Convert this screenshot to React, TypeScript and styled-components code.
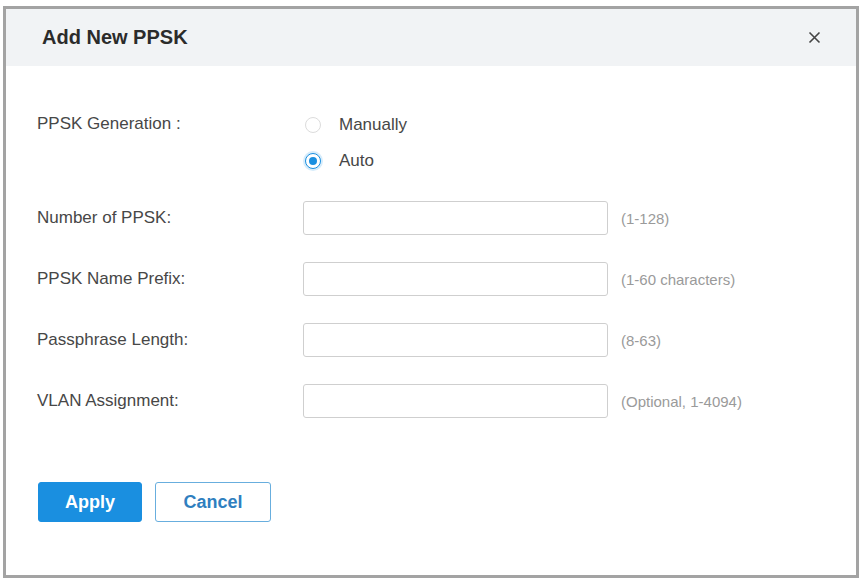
import React, { useState } from 'react';
import styled, { createGlobalStyle } from 'styled-components';

const GlobalStyle = createGlobalStyle`
  html, body {
    margin: 0;
    padding: 0;
    background: #ffffff;
    font-family: "Liberation Sans", Arial, sans-serif;
  }
`;

const Page = styled.div`
  width: 865px;
  height: 579px;
  padding: 6px 0 0 3px;
  box-sizing: border-box;
`;

const Dialog = styled.div`
  width: 856px;
  height: 572px;
  box-sizing: border-box;
  border: 3px solid #a3a3a3;
  background: #fff;
  display: flex;
  flex-direction: column;
`;

const Header = styled.div`
  height: 57px;
  flex-shrink: 0;
  background: #f1f3f5;
  display: flex;
  align-items: center;
  justify-content: space-between;
  padding: 0 32px 0 36px;
`;

const Title = styled.h2`
  margin: 0;
  font-size: 20px;
  font-weight: 700;
  color: #2b2b2b;
`;

const CloseButton = styled.button`
  border: none;
  background: transparent;
  padding: 0;
  width: 20px;
  height: 20px;
  display: flex;
  align-items: center;
  justify-content: center;
  cursor: pointer;
  color: #444;
`;

const Body = styled.div`
  padding: 41px 30px 0 31px;
  display: flex;
  flex-direction: column;
`;

const Row = styled.div<{ $gap?: number }>`
  display: flex;
  align-items: center;
  margin-bottom: ${(p) => p.$gap ?? 27}px;
`;

const TopRow = styled(Row)`
  align-items: flex-start;
`;

const Label = styled.div`
  width: 266px;
  flex-shrink: 0;
  font-size: 17px;
  color: #474747;
`;

const TopLabel = styled(Label)`
  line-height: 34px;
`;

const RadioGroup = styled.div`
  display: flex;
  flex-direction: column;
`;

const RadioItem = styled.label`
  height: 36px;
  display: flex;
  align-items: center;
  gap: 18px;
  padding-left: 2px;
  font-size: 17px;
  color: #474747;
  cursor: pointer;
`;

const RadioCircle = styled.span<{ $checked: boolean }>`
  width: 16px;
  height: 16px;
  box-sizing: border-box;
  border-radius: 50%;
  border: 1px solid ${(p) => (p.$checked ? '#1a8fe0' : '#dcdcdc')};
  background: #fff;
  display: flex;
  align-items: center;
  justify-content: center;
  box-shadow: ${(p) => (p.$checked ? '0 0 0 2px #d6ecfb' : 'none')};

  &::after {
    content: '';
    width: 8px;
    height: 8px;
    border-radius: 50%;
    background: ${(p) => (p.$checked ? '#1a8fe0' : 'transparent')};
  }
`;

const Input = styled.input`
  width: 305px;
  height: 34px;
  box-sizing: border-box;
  border: 1px solid #cfcfcf;
  border-radius: 3px;
  padding: 0 10px;
  font-size: 14px;
  font-family: inherit;
  outline: none;
`;

const Hint = styled.span`
  margin-left: 13px;
  font-size: 15px;
  color: #9a9a9a;
`;

const Footer = styled.div`
  display: flex;
  gap: 13px;
  padding: 64px 0 0 1px;
`;

const Button = styled.button<{ $primary?: boolean }>`
  height: 40px;
  box-sizing: border-box;
  border-radius: 3px;
  font-family: inherit;
  font-size: 18px;
  font-weight: 700;
  cursor: pointer;
  border: 1px solid ${(p) => (p.$primary ? '#1a8fe0' : '#68aede')};
  background: ${(p) => (p.$primary ? '#1a8fe0' : '#ffffff')};
  color: ${(p) => (p.$primary ? '#ffffff' : '#2f7fbf')};
  width: ${(p) => (p.$primary ? 104 : 116)}px;
`;

const fields = [
  { label: 'Number of PPSK:', hint: '(1-128)' },
  { label: 'PPSK Name Prefix:', hint: '(1-60 characters)' },
  { label: 'Passphrase Length:', hint: '(8-63)' },
  { label: 'VLAN Assignment:', hint: '(Optional, 1-4094)' },
];

const App: React.FC = () => {
  const [mode, setMode] = useState<'manual' | 'auto'>('auto');

  return (
    <Page>
      <GlobalStyle />
      <Dialog>
        <Header>
          <Title>Add New PPSK</Title>
          <CloseButton aria-label="Close">
            <svg width="13" height="13" viewBox="0 0 13 13">
              <path d="M1.5 1.5 L11.5 11.5 M11.5 1.5 L1.5 11.5" stroke="#444" strokeWidth="1.6" />
            </svg>
          </CloseButton>
        </Header>
        <Body>
          <TopRow $gap={22}>
            <TopLabel>PPSK Generation :</TopLabel>
            <RadioGroup>
              <RadioItem onClick={() => setMode('manual')}>
                <RadioCircle $checked={mode === 'manual'} />
                Manually
              </RadioItem>
              <RadioItem onClick={() => setMode('auto')}>
                <RadioCircle $checked={mode === 'auto'} />
                Auto
              </RadioItem>
            </RadioGroup>
          </TopRow>
          {fields.map((f, i) => (
            <Row key={f.label} $gap={i === fields.length - 1 ? 0 : 27}>
              <Label>{f.label}</Label>
              <Input />
              <Hint>{f.hint}</Hint>
            </Row>
          ))}
          <Footer>
            <Button $primary>Apply</Button>
            <Button>Cancel</Button>
          </Footer>
        </Body>
      </Dialog>
    </Page>
  );
};

export default App;
